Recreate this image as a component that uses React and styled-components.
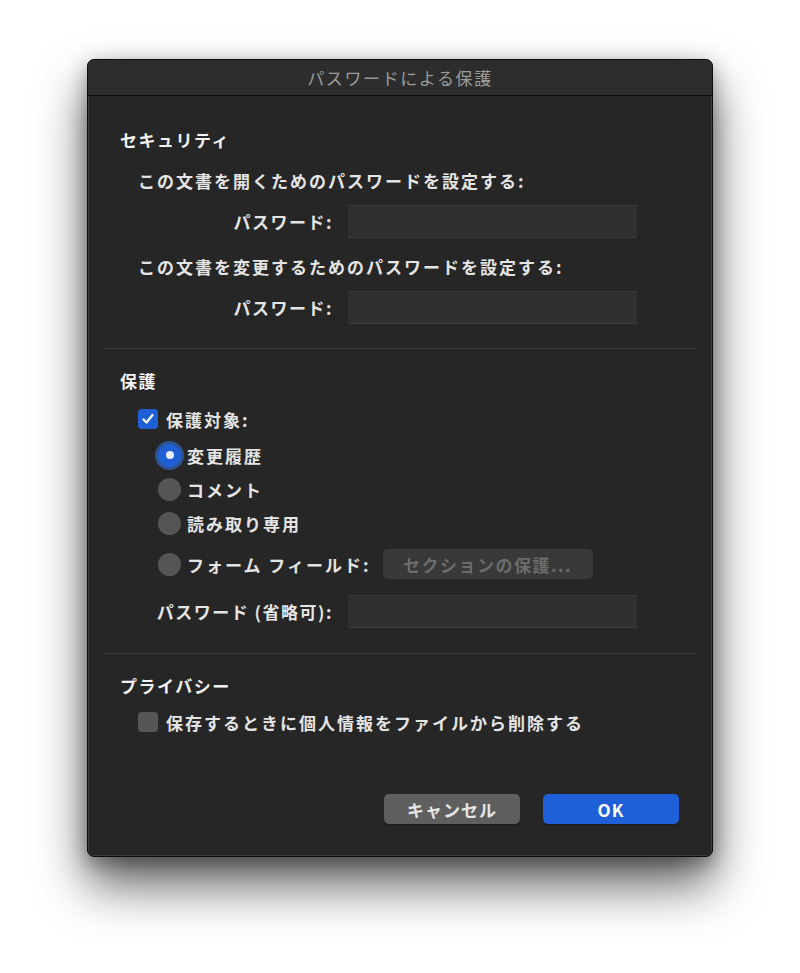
import React from 'react'
import styled, { createGlobalStyle } from 'styled-components'

const GlobalStyle = createGlobalStyle`
  html, body {
    margin: 0;
    padding: 0;
    background: #ffffff;
  }
  body {
    font-family: "Noto Sans CJK JP", "Noto Sans", sans-serif;
  }
`

const App = () => {
  return (
    <Page>
      <GlobalStyle />
      <Window>
        <TitleBar>パスワードによる保護</TitleBar>
        <Content>
          <Heading>セキュリティ</Heading>
          <Label $top={17}>この文書を開くためのパスワードを設定する:</Label>
          <FieldRow $top={12}>
            <FieldLabel>パスワード:</FieldLabel>
            <Input />
          </FieldRow>
          <Label $top={17}>この文書を変更するためのパスワードを設定する:</Label>
          <FieldRow $top={12}>
            <FieldLabel>パスワード:</FieldLabel>
            <Input />
          </FieldRow>

          <Divider $top={24} />

          <Heading $top={20}>保護</Heading>
          <CheckRow $top={14}>
            <CheckBox $checked>
              <svg width="14" height="14" viewBox="0 0 14 14">
                <polyline points="2.5,7.5 5.5,10.5 11.5,3" fill="none" stroke="#fff" strokeWidth="2.2" strokeLinecap="round" strokeLinejoin="round" />
              </svg>
            </CheckBox>
            <span>保護対象:</span>
          </CheckRow>
          <RadioRow $top={7}>
            <Radio $checked />
            <span>変更履歴</span>
          </RadioRow>
          <RadioRow>
            <Radio />
            <span>コメント</span>
          </RadioRow>
          <RadioRow>
            <Radio />
            <span>読み取り専用</span>
          </RadioRow>
          <FormRow>
            <Radio />
            <span>フォーム フィールド:</span>
            <DisabledButton>セクションの保護...</DisabledButton>
          </FormRow>
          <FieldRow $top={15}>
            <FieldLabel>パスワード (省略可):</FieldLabel>
            <Input />
          </FieldRow>

          <Divider $top={25} />

          <Heading $top={20}>プライバシー</Heading>
          <CheckRow $top={12}>
            <CheckBox />
            <span>保存するときに個人情報をファイルから削除する</span>
          </CheckRow>

          <Footer>
            <Button>キャンセル</Button>
            <Button $primary>OK</Button>
          </Footer>
        </Content>
      </Window>
    </Page>
  )
}

export default App

const Page = styled.div`
  width: 800px;
  height: 973px;
  display: flex;
  justify-content: center;
  padding-top: 59px;
  box-sizing: border-box;
`

const Window = styled.div`
  width: 626px;
  height: 798px;
  box-sizing: border-box;
  display: flex;
  flex-direction: column;
  background: #262626;
  border: 1px solid #0c0c0c;
  border-radius: 7px;
  box-shadow: inset 0 0 0 1px #3c3c3c, 0 28px 50px rgba(0, 0, 0, 0.62), 0 6px 20px rgba(0, 0, 0, 0.35);
  overflow: hidden;
`

const TitleBar = styled.div`
  height: 35px;
  flex-shrink: 0;
  display: flex;
  align-items: center;
  justify-content: center;
  background: #2d2d2d;
  border-bottom: 1px solid #0e0e0e;
  color: #9a9a9a;
  font-size: 17px;
  letter-spacing: 1.6px;
`

const Content = styled.div`
  flex: 1;
  display: flex;
  flex-direction: column;
  padding: 32px 33px 32px 32px;
  color: #e4e4e4;
  font-size: 17px;
  font-weight: 700;
  letter-spacing: 2px;
`

const Heading = styled.div`
  height: 24px;
  line-height: 24px;
  margin-top: ${p => p.$top || 0}px;
  color: #f2f2f2;
  letter-spacing: 1.5px;
`

const Label = styled.div`
  height: 24px;
  line-height: 24px;
  margin-top: ${p => p.$top || 0}px;
  padding-left: 18px;
`

const FieldRow = styled.div`
  display: flex;
  align-items: center;
  gap: 15px;
  height: 33px;
  margin-top: ${p => p.$top || 0}px;
`

const FieldLabel = styled.div`
  width: 213px;
  text-align: right;
  white-space: nowrap;
  letter-spacing: 1.5px;
`

const Input = styled.div`
  width: 289px;
  height: 33px;
  box-sizing: border-box;
  background: #2f2f2f;
  border-top: 1px solid #3a3a3a;
  border-bottom: 1px solid #3c3c3c;
`

const Divider = styled.div`
  height: 1px;
  background: #3a3a3a;
  margin: ${p => p.$top || 0}px -17px 0 -16px;
`

const CheckRow = styled.div`
  display: flex;
  align-items: center;
  gap: 8px;
  height: 24px;
  margin-top: ${p => p.$top || 0}px;
  padding-left: 18px;
`

const CheckBox = styled.div`
  width: 20px;
  height: 20px;
  box-sizing: border-box;
  border-radius: 4px;
  display: flex;
  align-items: center;
  justify-content: center;
  background: ${p => (p.$checked ? '#1f5fd6' : '#565656')};
`

const RadioRow = styled.div`
  display: flex;
  align-items: center;
  gap: 6px;
  height: 34px;
  margin-top: ${p => p.$top || 0}px;
  padding-left: 38px;
`

const FormRow = styled(RadioRow)`
  height: 32px;
  margin-top: 8px;

  & > span {
    margin-right: 6px;
  }
`

const Radio = styled.div`
  width: 23px;
  height: 23px;
  flex-shrink: 0;
  box-sizing: border-box;
  border-radius: 50%;
  position: relative;
  background: ${p => (p.$checked ? '#1f5fd6' : '#555555')};
  box-shadow: ${p => (p.$checked ? '0 0 0 3px rgba(52, 120, 230, 0.55)' : 'none')};

  &::after {
    content: '';
    display: ${p => (p.$checked ? 'block' : 'none')};
    position: absolute;
    left: 50%;
    top: 50%;
    width: 8px;
    height: 8px;
    margin: -4px 0 0 -4px;
    border-radius: 50%;
    background: #e8eefc;
  }
`

const DisabledButton = styled.div`
  width: 210px;
  height: 30px;
  border-radius: 5px;
  display: flex;
  align-items: center;
  justify-content: center;
  background: #393939;
  color: #6c6c6c;
  font-size: 17px;
  letter-spacing: 1.5px;
`

const Footer = styled.div`
  margin-top: auto;
  display: flex;
  justify-content: flex-end;
  gap: 23px;
`

const Button = styled.div`
  width: 136px;
  height: 30px;
  border-radius: 5px;
  display: flex;
  align-items: center;
  justify-content: center;
  background: ${p => (p.$primary ? '#1f5fd8' : '#5f5f5f')};
  color: ${p => (p.$primary ? '#ffffff' : '#e6e6e6')};
  font-size: 17px;
  letter-spacing: 1px;
  box-shadow: 0 1px 1px rgba(0, 0, 0, 0.3);
`
